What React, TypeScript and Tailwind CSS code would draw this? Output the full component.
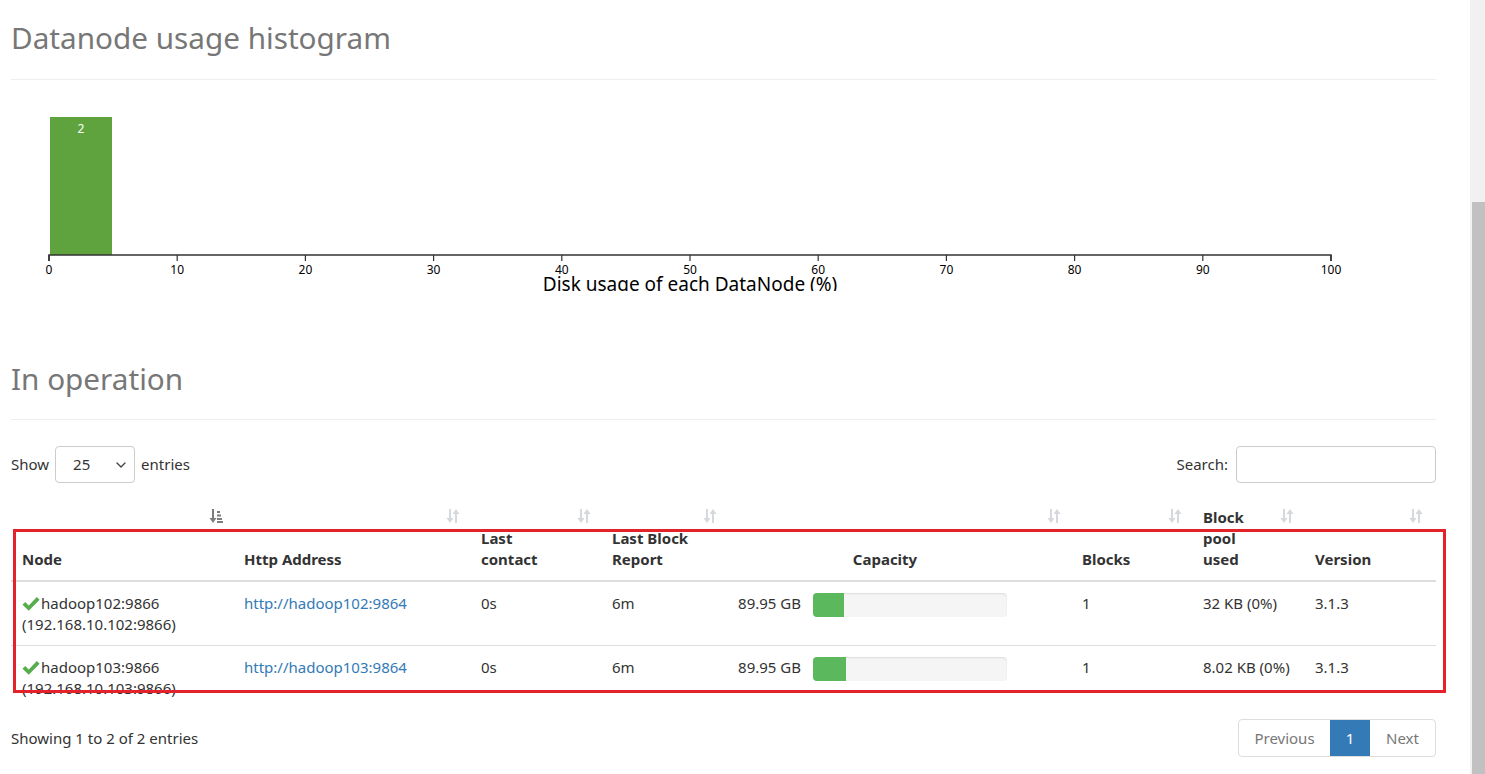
import { ChevronDown } from "lucide-react";

interface NodeRow {
  name: string;
  ip: string;
  http: string;
  lastContact: string;
  lastBlock: string;
  capacity: string;
  used: number;
  blocks: string;
  poolUsed: string;
  version: string;
}

const rows: NodeRow[] = [
  {
    name: "hadoop102:9866",
    ip: "(192.168.10.102:9866)",
    http: "http://hadoop102:9864",
    lastContact: "0s",
    lastBlock: "6m",
    capacity: "89.95 GB",
    used: 16,
    blocks: "1",
    poolUsed: "32 KB (0%)",
    version: "3.1.3",
  },
  {
    name: "hadoop103:9866",
    ip: "(192.168.10.103:9866)",
    http: "http://hadoop103:9864",
    lastContact: "0s",
    lastBlock: "6m",
    capacity: "89.95 GB",
    used: 17,
    blocks: "1",
    poolUsed: "8.02 KB (0%)",
    version: "3.1.3",
  },
];

const cols = "grid grid-cols-[225px_237px_131px_126px_344px_121px_112px_129px]";

function SortIcon({ active = false }: { active?: boolean }) {
  if (active) {
    return (
      <svg width="14" height="16" viewBox="0 0 14 16" fill="#7d7d7d">
        <rect x="3" y="1" width="2" height="10" />
        <polygon points="0.5,10 7.5,10 4,15" />
        <rect x="8" y="3" width="3" height="2" />
        <rect x="8" y="6.5" width="4" height="2" />
        <rect x="8" y="10" width="5" height="2" />
        <rect x="8" y="13" width="6" height="2" />
      </svg>
    );
  }
  return (
    <svg width="14" height="16" viewBox="0 0 14 16" fill="#d5d8dc">
      <rect x="3" y="1" width="2" height="10" />
      <polygon points="0.5,10 7.5,10 4,15" />
      <rect x="9" y="5" width="2" height="10" />
      <polygon points="6.5,6 13.5,6 10,1" />
    </svg>
  );
}

function CheckIcon() {
  return (
    <svg width="18" height="16" viewBox="0 0 17 15" className="mr-px">
      <path d="M0.5 8.2 L3 5.6 L6.4 8.9 L14 1 L16.6 3.6 L6.4 13.8 Z" fill="#55ad4b" />
    </svg>
  );
}

function Histogram() {
  const ticks = Array.from({ length: 11 }, (_, i) => i * 10);
  const x = (v: number) => 38 + v * 12.82;
  return (
    <svg width="1425" height="211" className="block">
      <rect x="39" y="37" width="62" height="138" fill="#5fa33f" />
      <text x="70" y="53" fill="#fff" fontSize="12" textAnchor="middle">
        2
      </text>
      <path d="M38 181 V175 H1320 V181" fill="none" stroke="#333" strokeWidth="1.6" />
      {ticks.map((t) => (
        <g key={t}>
          <line x1={x(t)} x2={x(t)} y1="175" y2="181" stroke="#333" strokeWidth="1.2" />
          <text x={x(t)} y="194" fontSize="12" textAnchor="middle" fill="#000">
            {t}
          </text>
        </g>
      ))}
      <text x="679" y="211" fontSize="19" textAnchor="middle" fill="#000">
        Disk usage of each DataNode (%)
      </text>
    </svg>
  );
}

function HeaderCell({
  children,
  active = false,
  className = "",
}: {
  children: React.ReactNode;
  active?: boolean;
  className?: string;
}) {
  return (
    <div className={`relative pt-2 pb-[10px] flex items-end ${className}`}>
      <div>{children}</div>
      <span className="absolute top-[9px] right-[13px]">
        <SortIcon active={active} />
      </span>
    </div>
  );
}

export default function App() {
  return (
    <div className="relative flex h-[774px] w-[1485px] overflow-hidden bg-white font-['Noto_Sans',sans-serif] text-[15px] leading-[21px] text-[#333]">
      <div className="flex-1 pl-[11px]">
        <div className="w-[1425px]">
          <h1 className="border-b border-[#eee] pt-[21px] pb-[25px] text-[29.7px] leading-[33px] font-normal text-[#777]">
            Datanode usage histogram
          </h1>
          <Histogram />

          <h1 className="border-b border-[#eee] pt-[71px] pb-[24px] text-[29.7px] leading-[33px] font-normal text-[#777]">
            In operation
          </h1>

          <div className="mt-[26px] flex items-center justify-between">
            <div className="flex items-center gap-[6px]">
              <span>Show</span>
              <div className="flex h-[37px] w-[80px] items-center justify-between rounded-[4px] border border-[#ccc] pl-[17px] pr-[5px]">
                <span>25</span>
                <ChevronDown className="h-4 w-4 text-[#444]" strokeWidth={2} />
              </div>
              <span>entries</span>
            </div>
            <div className="flex items-center gap-[8px]">
              <span>Search:</span>
              <div className="h-[37px] w-[200px] rounded-[4px] border border-[#ccc]" />
            </div>
          </div>

          <div className={`${cols} mt-[16px] border-b-2 border-[#ddd] font-bold`}>
            <HeaderCell active className="pl-[11px]">Node</HeaderCell>
            <HeaderCell className="pl-2">Http Address</HeaderCell>
            <HeaderCell className="pl-2">
              Last
              <br />
              contact
            </HeaderCell>
            <HeaderCell className="pl-2">
              Last Block
              <br />
              Report
            </HeaderCell>
            <HeaderCell className="justify-center pl-2 pr-[42px]">Capacity</HeaderCell>
            <HeaderCell className="pl-2">Blocks</HeaderCell>
            <HeaderCell className="pl-2">
              Block
              <br />
              pool
              <br />
              used
            </HeaderCell>
            <HeaderCell className="pl-2">Version</HeaderCell>
          </div>

          {rows.map((r, i) => (
            <div
              key={r.name}
              className={`${cols} pt-[11px] pb-[10px] ${i > 0 ? "border-t border-[#ddd]" : ""}`}
            >
              <div className="pl-[11px]">
                <div className="flex items-center">
                  <CheckIcon />
                  <span>{r.name}</span>
                </div>
                <div>{r.ip}</div>
              </div>
              <div className="pl-2">
                <a href="#" className="text-[#337ab7]">
                  {r.http}
                </a>
              </div>
              <div className="pl-2">{r.lastContact}</div>
              <div className="pl-2">{r.lastBlock}</div>
              <div className="flex items-start gap-[12px] pl-2">
                <span className="w-[63px] text-right">{r.capacity}</span>
                <div className="h-[24px] w-[194px] overflow-hidden rounded-[4px] bg-[#f5f5f5] shadow-[inset_0_1px_2px_rgba(0,0,0,0.1)]">
                  <div className="h-full bg-[#5cb85c]" style={{ width: `${r.used}%` }} />
                </div>
              </div>
              <div className="pl-2">{r.blocks}</div>
              <div className="pl-2">{r.poolUsed}</div>
              <div className="pl-2">{r.version}</div>
            </div>
          ))}

          <div className="mt-[10px] flex h-[38px] items-center justify-between">
            <span>Showing 1 to 2 of 2 entries</span>
            <div className="flex h-[38px] overflow-hidden rounded-[4px] border border-[#ddd]">
              <span className="flex w-[91px] items-center justify-center text-[#777]">Previous</span>
              <span className="flex w-[40px] items-center justify-center bg-[#337ab7] text-white">1</span>
              <span className="flex w-[65px] items-center justify-center text-[#777]">Next</span>
            </div>
          </div>
        </div>
      </div>

      {/* browser scrollbar */}
      <div className="flex w-[15px] flex-col bg-[#f1f1f1]">
        <div className="h-[202px]" />
        <div className="ml-[2px] flex-1 bg-[#c1c1c1]" />
      </div>

      {/* annotation box */}
      <div className="pointer-events-none absolute top-[529px] left-[13px] h-[164px] w-[1433px] border-[3px] border-[#e3222b]" />
    </div>
  );
}
